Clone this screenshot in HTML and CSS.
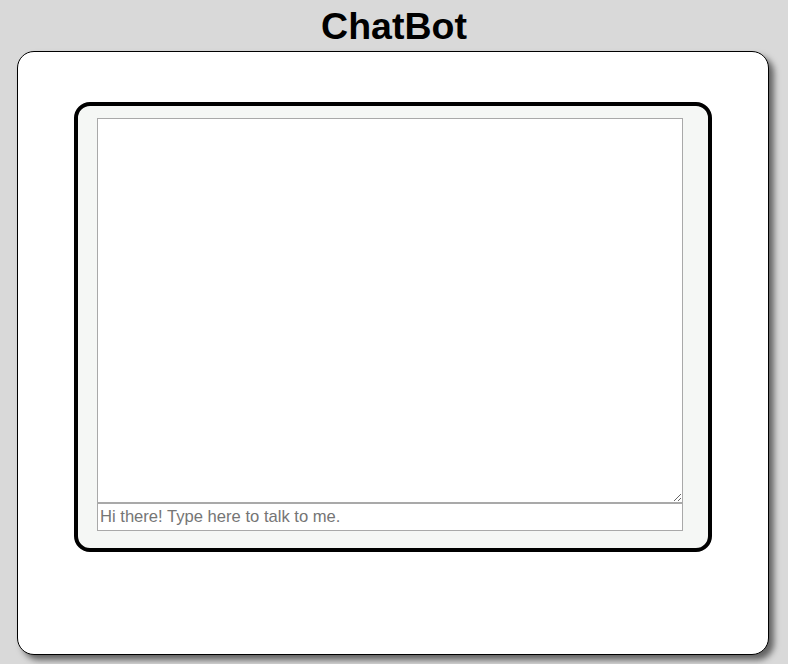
FILE: index.html
```html
<!DOCTYPE html>
<html lang="en">
<head>
<meta charset="utf-8">
<title>ChatBot</title>
<link rel="stylesheet" href="styles.css">
</head>
<body>
<h1 class="title">ChatBot</h1>
<main class="card">
  <div class="chat">
    <textarea class="log"></textarea>
    <input class="entry" type="text" placeholder="Hi there! Type here to talk to me.">
  </div>
</main>
</body>
</html>
```
FILE: styles.css
```css
html, body {
  margin: 0;
  padding: 0;
}
body {
  background: #d9d9d9;
  font-family: "Liberation Sans", Arial, sans-serif;
  height: 664px;
  overflow: hidden;
}
.title {
  margin: 5px 0 4px;
  height: 42px;
  line-height: 42px;
  font-size: 37.5px;
  font-weight: bold;
  text-align: center;
  color: #000;
}
.card {
  box-sizing: border-box;
  margin-left: 17px;
  width: 752px;
  height: 604px;
  background: #fff;
  border: 1px solid #000;
  border-radius: 17px;
  box-shadow: 5px 5px 6px rgba(0, 0, 0, 0.55);
  padding-top: 50px;
}
.chat {
  box-sizing: border-box;
  margin: 0 auto;
  width: 638px;
  height: 450px;
  border: 4px solid #000;
  border-radius: 16px;
  background: #f5f7f5;
  padding: 12px 0 0 19px;
}
.log {
  display: block;
  box-sizing: border-box;
  margin: 0;
  width: 586px;
  height: 385px;
  border: 1px solid #a9a9a9;
  background: #fff;
  font-family: "Liberation Sans", Arial, sans-serif;
  font-size: 16px;
}
.entry {
  display: block;
  box-sizing: border-box;
  margin: 0;
  width: 586px;
  height: 28px;
  padding: 1px 2px;
  border: 1px solid #a9a9a9;
  background: #fff;
  font-family: "Liberation Sans", Arial, sans-serif;
  font-size: 16.6px;
  outline: none;
}
.entry::placeholder {
  color: #757575;
}
```
